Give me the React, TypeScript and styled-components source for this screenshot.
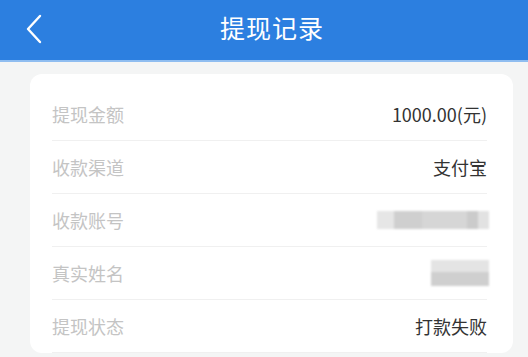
import React from "react";
import styled, { createGlobalStyle } from "styled-components";

const GlobalStyle = createGlobalStyle`
  html, body {
    margin: 0;
    padding: 0;
    background: #f4f5f5;
    font-family: "Noto Sans CJK SC", "Noto Sans", sans-serif;
  }
`;

type Row = { label: string; value?: string; masked?: "account" | "name" };

const rows: Row[] = [
  { label: "提现金额", value: "1000.00(元)" },
  { label: "收款渠道", value: "支付宝" },
  { label: "收款账号", masked: "account" },
  { label: "真实姓名", masked: "name" },
  { label: "提现状态", value: "打款失败" },
];

export default function App() {
  return (
    <Page>
      <GlobalStyle />
      <Header>
        <BackButton>
          <svg width="20" height="30" viewBox="0 0 20 30" fill="none">
            <path d="M16 2 L4 15 L16 28" stroke="#fff" strokeWidth="2.4" strokeLinecap="round" strokeLinejoin="round" />
          </svg>
        </BackButton>
        <Title>提现记录</Title>
      </Header>
      <Body>
        <Card>
          {rows.map((r) => (
            <InfoRow key={r.label}>
              <Label>{r.label}</Label>
              {r.value ? <Value>{r.value}</Value> : <Masked $kind={r.masked!} />}
            </InfoRow>
          ))}
        </Card>
      </Body>
    </Page>
  );
}

const Page = styled.div`
  width: 528px;
  height: 357px;
  overflow: hidden;
`;

const Header = styled.div`
  height: 60px;
  background: #2c7fe0;
  border-bottom: 2px solid #8fbdf0;
  display: flex;
  align-items: center;
  justify-content: center;
  position: relative;
`;

const BackButton = styled.div`
  position: absolute;
  left: 24px;
  top: 14px;
  display: flex;
`;

const Title = styled.div`
  color: #fff;
  font-size: 25px;
  letter-spacing: 1px;
  margin: -6px 0 0 16px;
`;

const Body = styled.div`
  padding: 12px 15px 0 30px;
`;

const Card = styled.div`
  background: #fff;
  border-radius: 12px;
  padding: 14px 26px 0 22px;
`;

const InfoRow = styled.div`
  height: 52px;
  display: flex;
  align-items: center;
  justify-content: space-between;
  border-bottom: 1px solid #f0f0f0;
`;

const Label = styled.span`
  color: #c4c4c4;
  font-size: 18px;
`;

const Value = styled.span`
  color: #333;
  font-size: 18px;
`;

const Masked = styled.div<{ $kind: "account" | "name" }>`
  width: ${({ $kind }) => ($kind === "account" ? "112px" : "58px")};
  height: ${({ $kind }) => ($kind === "account" ? "18px" : "26px")};
  margin-right: -2px;
  background: ${({ $kind }) =>
    $kind === "account"
      ? "linear-gradient(90deg, #e6e6e6 0 15%, #cfcfcf 15% 40%, #d6d6d6 40% 80%, #cbcbcb 80% 90%, #e2e2e2 90%)"
      : "linear-gradient(180deg, #e4e4e4 0 45%, #cfcfcf 45%)"};
  filter: blur(1px);
`;
